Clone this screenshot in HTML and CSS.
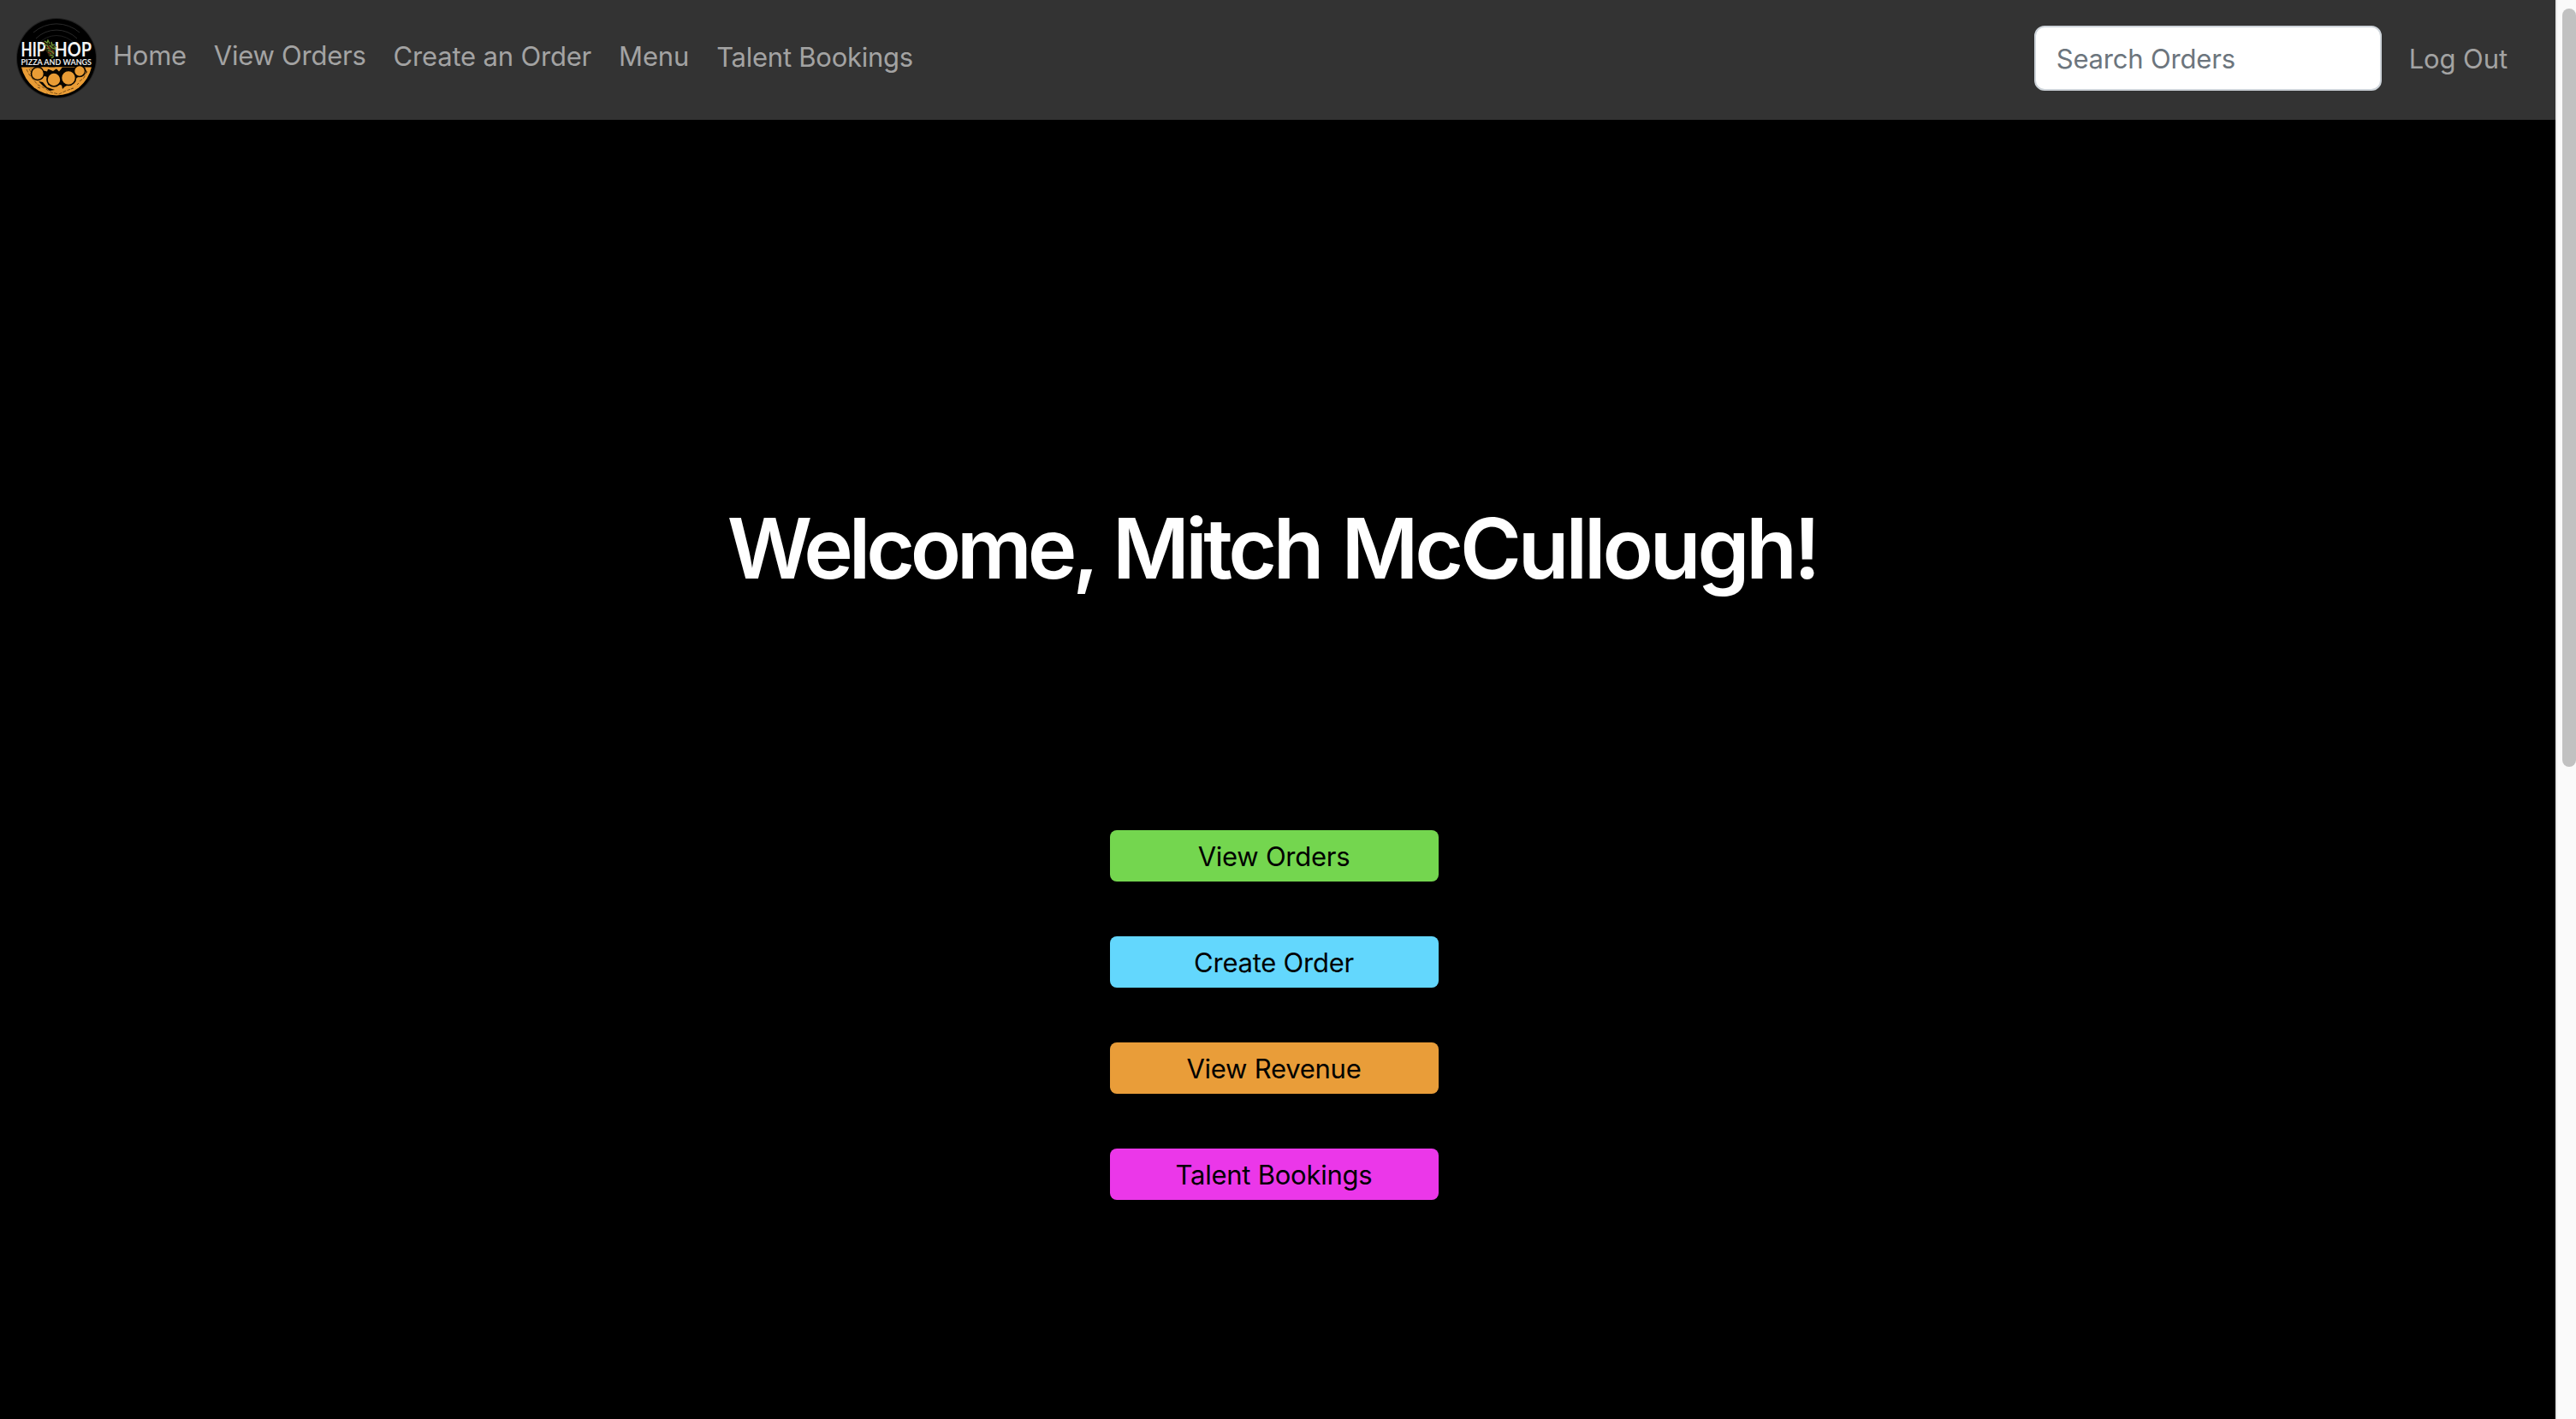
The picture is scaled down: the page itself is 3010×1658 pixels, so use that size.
FILE: index.html
```html
<!DOCTYPE html>
<html lang="en">
<head>
<meta charset="utf-8">
<title>Hip Hop Pizza and Wangs</title>
<link rel="stylesheet" href="styles.css">
</head>
<body>
<div class="page">
  <nav class="navbar">
    <a class="brand" aria-label="Hip Hop Pizza and Wangs">
      <svg class="logo" viewBox="0 0 96 96">
        <circle cx="48" cy="48" r="47" fill="#222"/>
        <circle cx="48" cy="48" r="46" fill="#000"/>
        <g fill="none" stroke="#292929" stroke-width="1">
          <path d="M21 18A41 41 0 0 1 75 18"/>
          <path d="M24 25A34 34 0 0 1 72 25"/>
          <path d="M27 31A28 28 0 0 1 69 31" stroke="#1e1e1e"/>
        </g>
        <g class="logo-name">
          <text x="6.500" y="46.200" textLength="29" lengthAdjust="spacingAndGlyphs">HIP</text>
          <text x="45.500" y="46.200" textLength="43.500" lengthAdjust="spacingAndGlyphs">HOP</text>
        </g>
        <text class="logo-tag" x="6.500" y="55.800" textLength="82.500" lengthAdjust="spacingAndGlyphs">PIZZA AND WANGS</text>
        <path d="M36 29l4 3 2-4 3 5 3 1-2 4 1 5-3 5-5-2-2-5-3-3 3-2z" fill="#25230f"/>
        <path d="M34 28l3 2 1-3 2 4M33 32l4 1 2 3M36 36l4 1M42 29l1 4 3-1M40 33l3 3 3 1M38 39l4 1 3 3M40 44l4 1M42 48l3-2M46 34l1 4" fill="none" stroke="#719b37" stroke-width="1.200"/>
        <path d="M38 41l4 2M43 39l2 3M38 34l3 4" stroke="#8e3c22" stroke-width="1.300"/>
        <path d="M7 58.500H89A42 42 0 0 1 7 58.500z" fill="#e99c35"/>
        <path d="M15 60l6 1 3 7 6 5 2-5 5 2 1 9 8 2 6-2 6 2 7-3 3-6 6-2 5-6 5 1-3-6H50l-6 4-5-2-8-1-5 3z" fill="#080500"/>
        <path d="M27 75l5 1 5 6 9 3-6 1-7-5zM54 79l5 1-4 4zM69 62l4 5-2 5z" fill="#080500"/>
        <g fill="#e99c35" stroke="#080500" stroke-width="1.600">
          <circle cx="26" cy="66" r="7.500"/>
          <circle cx="45" cy="73" r="8"/>
          <circle cx="62" cy="71" r="8.500"/>
          <circle cx="75" cy="63" r="6.500"/>
          <path d="M31 58.500h8l-2 5-4-1zM46 58.500h9l-4 5z" stroke="none"/>
        </g>
        <path d="M13 61l3 6 5 6 5 6 8 4 8 5 9 2 8-4 9-3M75 75l5-4 4-8M16 61l3 4M20 72l2 1M26 82l3 1M36 89l2 1M65 84l2-1M72 79l2-2M81 66l1-3" fill="none" stroke="#704613" stroke-width=".9" stroke-dasharray="4 1.500"/>
      </svg>
    </a>
    <div class="links">
      <a class="link">Home</a>
      <a class="link">View Orders</a>
      <a class="link mid">Create an Order</a>
      <a class="link mid">Menu</a>
      <a class="link low">Talent Bookings</a>
    </div>
    <div class="tools">
      <input class="search" type="text" placeholder="Search Orders" aria-label="Search Orders">
      <a class="logout">Log Out</a>
    </div>
  </nav>
  <main class="main">
    <h1 class="title"><span class="greeting">Welcome,</span> <span class="first">Mitch</span> <span class="last">McCullough!</span></h1>
    <div class="actions">
      <button class="btn green">View Orders</button>
      <button class="btn blue">Create Order</button>
      <button class="btn orange">View Revenue</button>
      <button class="btn pink">Talent Bookings</button>
    </div>
  </main>
</div>
<div class="scrollbar"><div class="thumb"></div></div>
</body>
</html>
```
FILE: styles.css
```css
* { box-sizing: border-box; }

body {
  margin: 0;
  height: 1658px;
  display: flex;
  overflow: hidden;
  background: #000;
  font: 400 31px/48px Inter, "Liberation Sans", sans-serif;
  letter-spacing: -0.25px;
}

.page { flex: 1; min-width: 0; }

.navbar {
  display: flex;
  height: 140px;
  padding-left: 18px;
  background: #333;
}

.brand { width: 114px; padding-top: 20px; }
.logo { display: block; width: 96px; height: 96px; }
.logo-name { font: 700 22px Lato, sans-serif; letter-spacing: 0; fill: #f4f4f4; }
.logo-tag { font: 700 9.5px Lato, sans-serif; letter-spacing: 0; fill: #e8e8e8; }

.links { display: flex; gap: 32px; padding-top: 41px; color: #a3a3a3; }
.mid { margin-top: 1px; letter-spacing: -0.18px; }
.low { margin-top: 2px; }

.tools { display: flex; margin-left: auto; padding: 30px 56px 0 0; gap: 32px; }
.search {
  width: 406px;
  height: 76px;
  padding: 1px 24px 0;
  border: 2px solid #ced4da;
  border-radius: 12px;
  background: #fff;
  font: inherit;
  letter-spacing: -0.18px;
}
.search::placeholder { color: #6c757d; opacity: 1; }
.logout { padding-top: 15px; color: #a3a3a3; letter-spacing: -0.1px; }

.main { display: flex; flex-direction: column; align-items: center; padding: 442px 9px 0 0; }
.title {
  margin: 0 4px 0 0;
  color: #fff;
  font-size: 97.5px;
  font-weight: 570;
  line-height: 118px;
  letter-spacing: -4px;
  word-spacing: 5px;
  white-space: nowrap;
}
.greeting { letter-spacing: -5.1px; }
.first { margin-left: -5px; letter-spacing: -4.5px; }
.last { margin-left: -1px; letter-spacing: -4.05px; }

.actions { display: flex; flex-direction: column; gap: 64px; margin-top: 270px; }
.btn {
  width: 384px;
  height: 60px;
  padding: 1px 0 0;
  border: 0;
  border-radius: 8px;
  color: #000;
  font: inherit;
  letter-spacing: inherit;
}
.green { background: #74d64f; }
.blue { background: #63d7fd; }
.orange { background: #e99d39; }
.pink { background: #eb37e9; }

.scrollbar {
  width: 24px;
  padding: 10px 0 0 6px;
  border-left: 2px solid #e8e8e8;
  background: #fafafa;
}
.thumb { width: 16px; height: 886px; border-radius: 8px; background: #c1c1c1; }
```
